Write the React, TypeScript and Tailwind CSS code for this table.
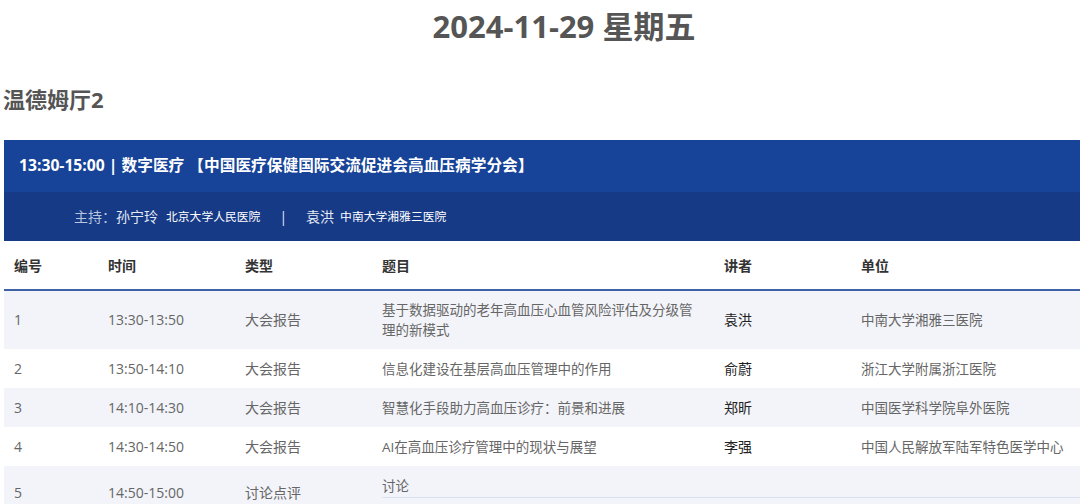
import React from "react";

type Row = {
  no: string;
  time: string;
  kind: string;
  title: string;
  speaker: string;
  unit: string;
  tall?: boolean;
};

const rows: Row[] = [
  {
    no: "1",
    time: "13:30-13:50",
    kind: "大会报告",
    title: "基于数据驱动的老年高血压心血管风险评估及分级管理的新模式",
    speaker: "袁洪",
    unit: "中南大学湘雅三医院",
    tall: true,
  },
  {
    no: "2",
    time: "13:50-14:10",
    kind: "大会报告",
    title: "信息化建设在基层高血压管理中的作用",
    speaker: "俞蔚",
    unit: "浙江大学附属浙江医院",
  },
  {
    no: "3",
    time: "14:10-14:30",
    kind: "大会报告",
    title: "智慧化手段助力高血压诊疗：前景和进展",
    speaker: "郑昕",
    unit: "中国医学科学院阜外医院",
  },
  {
    no: "4",
    time: "14:30-14:50",
    kind: "大会报告",
    title: "AI在高血压诊疗管理中的现状与展望",
    speaker: "李强",
    unit: "中国人民解放军陆军特色医学中心",
  },
];

const cols = "grid grid-cols-[92px_137px_137px_342px_137px_1fr]";

export default function App() {
  return (
    <div className="w-[1080px] h-[504px] overflow-hidden bg-white font-['Open_Sans','Noto_Sans_CJK_SC',sans-serif]">
      <div className="w-[1120px] ml-[4px]">
        <h1 className="pt-[6px] h-[40px] text-center text-[31px] leading-[40px] font-bold text-[#555]">
          2024-11-29 星期五
        </h1>

        <h2 className="mt-[43px] text-[22px] leading-[32px] font-bold text-[#555] -ml-[1px]">
          温德姆厅2
        </h2>

        <div className="mt-[25px]">
          {/* session header */}
          <div className="h-[52px] bg-[#174398] flex items-center pl-[15px] text-[15.7px] font-bold text-white">
            13:30-15:00 | 数字医疗 【中国医疗保健国际交流促进会高血压病学分会】
          </div>
          <div className="h-[49px] bg-[#163a86] flex items-center pl-[70px] text-white">
            <span className="text-[14px] text-[#b9c5de]">主持：</span>
            <span className="text-[14px] text-[#e4e9f4]">孙宁玲</span>
            <span className="ml-[8px] text-[11.8px]">北京大学人民医院</span>
            <span className="ml-[19px] text-[14px] text-[#e4e9f4]">|</span>
            <span className="ml-[19px] text-[14px] text-[#e4e9f4]">袁洪</span>
            <span className="ml-[6px] text-[11.8px]">中南大学湘雅三医院</span>
          </div>

          {/* table head */}
          <div className={`${cols} h-[50px] items-center border-b-2 border-[#3f62a6] text-[14px] font-bold text-[#333]`}>
            <div className="pl-[10px]">编号</div>
            <div className="pl-[12px]">时间</div>
            <div className="pl-[12px]">类型</div>
            <div className="pl-[12px]">题目</div>
            <div className="pl-[12px]">讲者</div>
            <div className="pl-[12px]">单位</div>
          </div>

          {rows.map((r, i) => (
            <div
              key={r.no}
              className={`${cols} items-center text-[14px] leading-[20px] text-[#666] ${
                r.tall ? "h-[58px]" : "h-[39px]"
              } ${i % 2 === 0 ? "bg-[#f3f4f9]" : "bg-white"}`}
            >
              <div className="pl-[10px]">{r.no}</div>
              <div className="pl-[12px]">{r.time}</div>
              <div className="pl-[12px]">{r.kind}</div>
              <div className="pl-[12px] pr-[12px] text-[13.5px]">{r.title}</div>
              <div className="pl-[12px] text-[#222]">{r.speaker}</div>
              <div className="pl-[12px] text-[13.5px]">{r.unit}</div>
            </div>
          ))}

          {/* discussion row */}
          <div className={`${cols} h-[54px] items-center bg-[#f3f4f9] text-[14px] leading-[20px] text-[#666]`}>
            <div className="pl-[10px]">5</div>
            <div className="pl-[12px]">14:50-15:00</div>
            <div className="pl-[12px]">讨论点评</div>
            <div className="col-span-3 self-stretch pl-[12px]">
              <div className="pt-[10px] pb-[1px] border-b border-[#d9e2f1] text-[13.5px]">讨论</div>
            </div>
          </div>
        </div>
      </div>
    </div>
  );
}
